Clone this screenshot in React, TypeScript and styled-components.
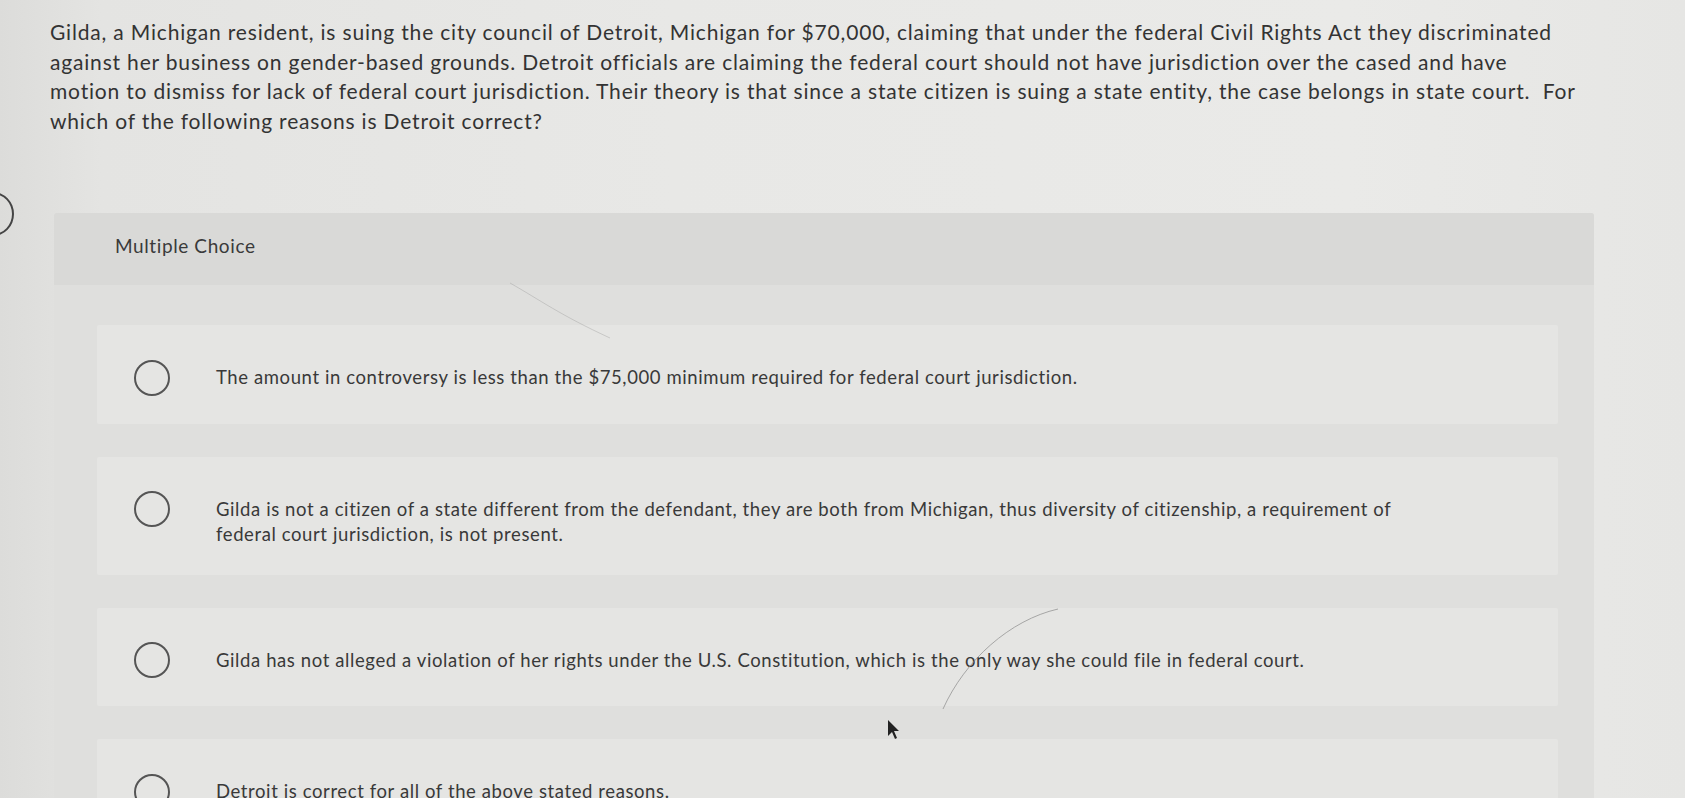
import React from "react";
import styled, { createGlobalStyle } from "styled-components";

const Global = createGlobalStyle`
  html, body { margin: 0; padding: 0; }
  body {
    width: 1685px;
    height: 798px;
    overflow: hidden;
    font-family: Lato, "Open Sans", sans-serif;
    color: #383838;
    background: linear-gradient(90deg, #dcdcda 0%, #e4e4e2 6%, #e8e8e6 40%, #eaeae8 80%, #e6e6e4 100%);
  }
`;

const Page = styled.div`
  position: relative;
  height: 798px;
  padding: 17px 0 0 50px;
  box-sizing: border-box;
  overflow: hidden;
`;

const Question = styled.p`
  margin: 0;
  width: 1531px;
  font-size: 21px;
  line-height: 29.5px;
  letter-spacing: 0.82px;
  color: #333;
`;

const Panel = styled.section`
  margin: 78px 0 0 4px;
  width: 1540px;
  background: #dfdfdd;
  border-radius: 3px;
`;

const PanelHeader = styled.div`
  height: 72px;
  box-sizing: border-box;
  padding: 22px 0 0 61px;
  font-size: 19px;
  line-height: 22px;
  letter-spacing: 0.6px;
  color: #3a3a3a;
  background: #d9d9d7;
  border-radius: 3px 3px 0 0;
`;

const OptionList = styled.div`
  display: flex;
  flex-direction: column;
  gap: 33px;
  padding: 40px 36px 40px 43px;
`;

const OptionRow = styled.label`
  display: flex;
  align-items: flex-start;
  gap: 46px;
  padding: 40px 0 28px 37px;
  background: #e5e5e3;
  border-radius: 2px;
`;

const Radio = styled.span`
  flex: none;
  width: 36px;
  height: 36px;
  margin-top: -5.5px;
  box-sizing: border-box;
  border: 2px solid #555;
  border-radius: 50%;
`;

const OptionText = styled.span`
  max-width: 1195px;
  font-size: 18.5px;
  line-height: 25px;
  letter-spacing: 0.6px;
  color: #393939;
`;

const EdgeButton = styled.span`
  position: absolute;
  left: -28px;
  top: 192px;
  width: 38px;
  height: 40px;
  border: 2px solid #444;
  border-radius: 50%;
`;

const Overlay = styled.svg`
  position: absolute;
  left: 0;
  top: 0;
  pointer-events: none;
`;

const options = [
  "The amount in controversy is less than the $75,000 minimum required for federal court jurisdiction.",
  "Gilda is not a citizen of a state different from the defendant, they are both from Michigan, thus diversity of citizenship, a requirement of federal court jurisdiction, is not present.",
  "Gilda has not alleged a violation of her rights under the U.S. Constitution, which is the only way she could file in federal court.",
  "Detroit is correct for all of the above stated reasons.",
];

export default function App() {
  return (
    <>
      <Global />
      <Page>
        <Question>
          Gilda, a Michigan resident, is suing the city council of Detroit, Michigan for $70,000, claiming that under the federal Civil Rights Act they discriminated against her business on gender-based grounds. Detroit officials are claiming the federal court should not have jurisdiction over the cased and have motion to dismiss for lack of federal court jurisdiction. Their theory is that since a state citizen is suing a state entity, the case belongs in state court.&nbsp; For which of the following reasons is Detroit correct?
        </Question>
        <Panel>
          <PanelHeader>Multiple Choice</PanelHeader>
          <OptionList>
            {options.map((o) => (
              <OptionRow key={o}>
                <Radio />
                <OptionText>{o}</OptionText>
              </OptionRow>
            ))}
          </OptionList>
        </Panel>
        <EdgeButton />
        <Overlay width="1685" height="798" viewBox="0 0 1685 798">
          <path d="M1058 609 C 1010 620, 965 660, 943 709" fill="none" stroke="#8a8a8a" strokeWidth="1" opacity="0.7" />
          <path d="M510 283 C 540 300, 560 315, 610 338" fill="none" stroke="#9a9a9a" strokeWidth="1" opacity="0.4" />
          <path d="M888 720 L888 736 L892 732 L895 739 L897 738 L894 731 L899 731 Z" fill="#222" />
        </Overlay>
      </Page>
    </>
  );
}
